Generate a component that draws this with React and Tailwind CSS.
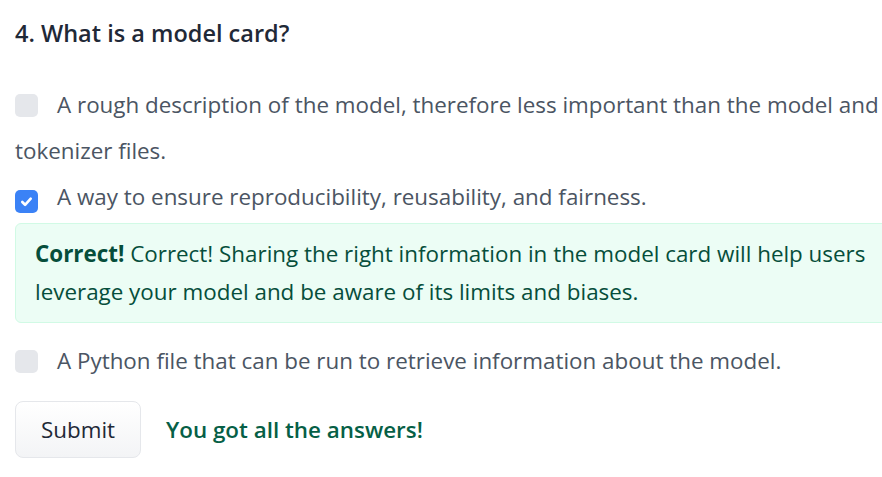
import React from 'react';

const Box = ({ checked }) => (
  <span
    className={
      'inline-flex items-center justify-center w-[23px] h-[23px] rounded-[5px] align-[-4px] mr-[19px] ' +
      (checked ? 'bg-[#3b82f6]' : 'bg-[#e5e7eb]')
    }
  >
    {checked && (
      <svg width="15" height="15" viewBox="0 0 16 16" fill="none">
        <path d="M3.5 8.5l3 3 6-6.5" stroke="white" strokeWidth="2.8" strokeLinecap="round" strokeLinejoin="round" />
      </svg>
    )}
  </span>
);

export default function App() {
  return (
    <div className="bg-white w-[882px] h-[477px] overflow-hidden pl-[15px] pt-[17px] font-['Open_Sans',sans-serif]">
      <h2 className="text-[23.5px] leading-[32px] font-semibold text-[#1f2937]">4. What is a model card?</h2>

      <div className="mt-[33px] text-[22.4px] text-[#4b5563]">
        <p className="leading-[46px]">
          <Box />A rough description of the model, therefore less important than the model and tokenizer files.
        </p>
        <p className="leading-[46px]">
          <Box checked />A way to ensure reproducibility, reusability, and fairness.
        </p>
        <div className="mt-[3px] mr-[-10px] rounded-[6px] border border-[#d1fae5] bg-[#ecfdf5] pl-[19px] pr-[12px] py-[11px] leading-[38px] text-[#064e3b]">
          <span className="font-bold">Correct!</span> Correct! Sharing the right information in the model card will help users leverage your model and be aware of its limits and biases.
        </div>
        <p className="mt-[15px] leading-[46px]">
          <Box />A Python file that can be run to retrieve information about the model.
        </p>
      </div>

      <div className="mt-[17px] flex items-center">
        <button className="h-[57px] w-[126px] rounded-[8px] border border-[#e5e7eb] bg-gradient-to-b from-white to-[#f3f4f6] text-[22.4px] text-[#1f2937]">
          Submit
        </button>
        <span className="ml-[25px] text-[22.4px] font-semibold text-[#065f46]">You got all the answers!</span>
      </div>
    </div>
  );
}
